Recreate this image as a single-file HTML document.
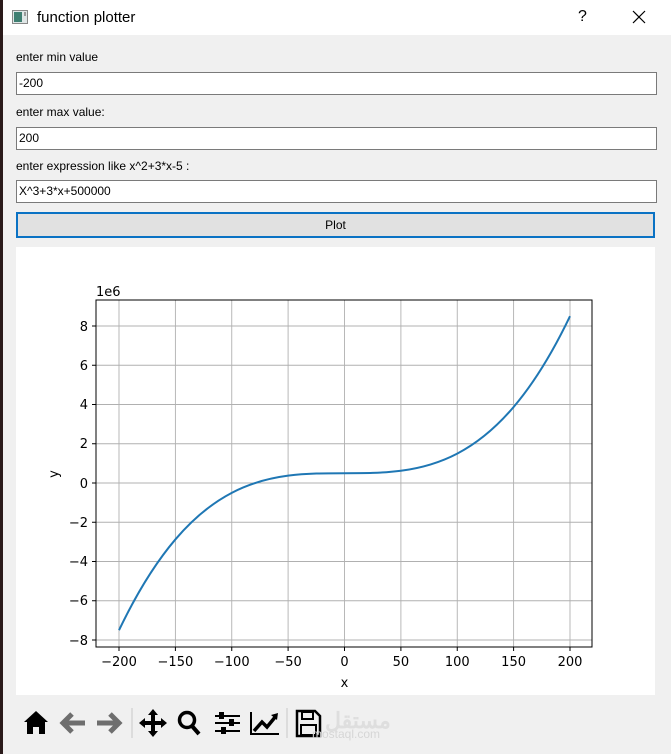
<!DOCTYPE html>
<html><head><style>
body{margin:0;width:671px;height:754px;overflow:hidden;background:#f0f0f0;font-family:"Liberation Sans",sans-serif;position:relative}
.edge{position:absolute;left:0;top:0;width:3px;height:754px;background:#2a1a1a}
.title{position:absolute;left:3px;top:0;width:668px;height:35px;background:#fff}
.title .t{position:absolute;left:34px;top:9px;font-size:15px;color:#000}
.lbl{position:absolute;left:16px;font-size:12px;color:#000}
.inp{position:absolute;left:16px;width:637px;height:21px;border:1px solid #7a7a7a;background:#fff;font-size:12px;line-height:21px;padding-left:2px;box-sizing:content-box}
.btn{position:absolute;left:16px;top:212px;width:635px;height:22px;border:2px solid #0a72c4;background:#e1e1e1;font-size:12px;text-align:center;line-height:22px}
.canvas{position:absolute;left:16px;top:247px;width:639px;height:448px;background:#fff}
</style></head><body>
<div class="edge"></div>
<div class="title">
<svg style="position:absolute;left:9px;top:10px" width="16" height="14"><rect x="0.5" y="0.5" width="15" height="13" fill="#dfe6e6" stroke="#888"/><rect x="2" y="2" width="8" height="10" fill="#3f7f72"/><rect x="12" y="2" width="2" height="4" fill="#999"/></svg>
<span class="t">function plotter</span>
<span style="position:absolute;left:575px;top:8px;font-size:16px">?</span>
<svg style="position:absolute;left:629px;top:10px" width="14" height="14"><path d="M1 1L13 13M13 1L1 13" stroke="#000" stroke-width="1.2"/></svg>
</div>
<div class="lbl" style="top:50px">enter min value</div>
<div class="inp" style="top:72px">-200</div>
<div class="lbl" style="top:105px">enter max value:</div>
<div class="inp" style="top:127px">200</div>
<div class="lbl" style="top:159px">enter expression like x^2+3*x-5 :</div>
<div class="inp" style="top:180px">X^3+3*x+500000</div>
<div class="btn">Plot</div>
<div class="canvas"></div>
<svg style="position:absolute;left:0;top:0" width="671" height="754" font-family="DejaVu Sans, sans-serif" font-size="13">
<g stroke="#b0b0b0" stroke-width="0.9">
<line x1="119" y1="300" x2="119" y2="647"/><line x1="175.4" y1="300" x2="175.4" y2="647"/><line x1="231.75" y1="300" x2="231.75" y2="647"/><line x1="288.1" y1="300" x2="288.1" y2="647"/><line x1="344.5" y1="300" x2="344.5" y2="647"/><line x1="400.9" y1="300" x2="400.9" y2="647"/><line x1="457.25" y1="300" x2="457.25" y2="647"/><line x1="513.6" y1="300" x2="513.6" y2="647"/><line x1="570" y1="300" x2="570" y2="647"/>
<line x1="96" y1="326" x2="592" y2="326"/><line x1="96" y1="365.25" x2="592" y2="365.25"/><line x1="96" y1="404.5" x2="592" y2="404.5"/><line x1="96" y1="443.75" x2="592" y2="443.75"/><line x1="96" y1="483" x2="592" y2="483"/><line x1="96" y1="522.25" x2="592" y2="522.25"/><line x1="96" y1="561.5" x2="592" y2="561.5"/><line x1="96" y1="600.75" x2="592" y2="600.75"/><line x1="96" y1="640" x2="592" y2="640"/>
</g>
<path fill="none" stroke="#1f77b4" stroke-width="2" d="M119 630.2 C269.33 316.2 419.67 630.2 570 316.2"/>
<rect x="96" y="300" width="496" height="347" fill="none" stroke="#000" stroke-width="1"/>
<g stroke="#000">
<line x1="119" y1="647" x2="119" y2="651"/><line x1="175.4" y1="647" x2="175.4" y2="651"/><line x1="231.75" y1="647" x2="231.75" y2="651"/><line x1="288.1" y1="647" x2="288.1" y2="651"/><line x1="344.5" y1="647" x2="344.5" y2="651"/><line x1="400.9" y1="647" x2="400.9" y2="651"/><line x1="457.25" y1="647" x2="457.25" y2="651"/><line x1="513.6" y1="647" x2="513.6" y2="651"/><line x1="570" y1="647" x2="570" y2="651"/>
<line x1="92" y1="326" x2="96" y2="326"/><line x1="92" y1="365.25" x2="96" y2="365.25"/><line x1="92" y1="404.5" x2="96" y2="404.5"/><line x1="92" y1="443.75" x2="96" y2="443.75"/><line x1="92" y1="483" x2="96" y2="483"/><line x1="92" y1="522.25" x2="96" y2="522.25"/><line x1="92" y1="561.5" x2="96" y2="561.5"/><line x1="92" y1="600.75" x2="96" y2="600.75"/><line x1="92" y1="640" x2="96" y2="640"/>
</g>
<g text-anchor="middle">
<text x="119" y="666">−200</text><text x="175.4" y="666">−150</text><text x="231.75" y="666">−100</text><text x="288.1" y="666">−50</text><text x="344.5" y="666">0</text><text x="400.9" y="666">50</text><text x="457.25" y="666">100</text><text x="513.6" y="666">150</text><text x="570" y="666">200</text>
<text x="344.5" y="687">x</text>
</g>
<g text-anchor="end">
<text x="88" y="331">8</text><text x="88" y="370">6</text><text x="88" y="409">4</text><text x="88" y="448">2</text><text x="88" y="488">0</text><text x="88" y="527">−2</text><text x="88" y="566">−4</text><text x="88" y="605">−6</text><text x="88" y="645">−8</text>
</g>
<text x="96" y="296">1e6</text>
<text transform="translate(58,474) rotate(-90)" text-anchor="middle">y</text>
<g fill="#000">
<path d="M24 722 L36 711 L48 722 L45 722 L45 734 L39 734 L39 727 L33 727 L33 734 L27 734 L27 722Z"/>
</g>
<path d="M72 714 L63 723 L72 732 M63 723 L85 723" stroke="#6e6e6e" stroke-width="5" fill="none"/>
<path d="M110 714 L119 723 L110 732 M97 723 L119 723" stroke="#6e6e6e" stroke-width="5" fill="none"/>
<line x1="132" y1="708" x2="132" y2="738" stroke="#c8c8c8"/>
<g fill="#000">
<path d="M153 709 L158 715 L155 715 L155 721 L161 721 L161 718 L167 723 L161 728 L161 725 L155 725 L155 731 L158 731 L153 737 L148 731 L151 731 L151 725 L145 725 L145 728 L139 723 L145 718 L145 721 L151 721 L151 715 L148 715Z"/>
</g>
<circle cx="187" cy="720" r="7.5" fill="none" stroke="#000" stroke-width="3.5"/>
<line x1="192" y1="726" x2="199" y2="734" stroke="#000" stroke-width="4"/>
<g stroke="#000" stroke-width="2"><line x1="215" y1="716" x2="240" y2="716"/><line x1="215" y1="723" x2="240" y2="723"/><line x1="215" y1="731" x2="240" y2="731"/></g>
<g fill="#000"><rect x="219" y="712" width="5" height="7"/><rect x="229" y="719" width="5" height="7"/><rect x="221" y="727" width="5" height="7"/></g>
<path d="M251 712 L251 734 L279 734" stroke="#000" stroke-width="2" fill="none"/>
<path d="M254 731 L262 722 L267 727 L276 716" stroke="#000" stroke-width="3.5" fill="none"/>
<path d="M271 715 L278 713 L277 720Z" fill="#000"/>
<line x1="287" y1="708" x2="287" y2="738" stroke="#c8c8c8"/>
<path d="M297 711 L315 711 L320 716 L320 736 L297 736Z" fill="none" stroke="#000" stroke-width="2.5"/>
<rect x="302" y="712" width="11" height="7" fill="none" stroke="#000" stroke-width="2"/>
<rect x="301" y="725" width="15" height="10" fill="none" stroke="#000" stroke-width="2"/>
<text x="325" y="728" font-family="Liberation Sans" font-size="22" fill="#dedede" font-weight="bold">مستقل</text>
<text x="312" y="738" font-family="Liberation Sans" font-size="12" fill="#d6d6d6">mostaql.com</text>
</svg>
</body></html>
